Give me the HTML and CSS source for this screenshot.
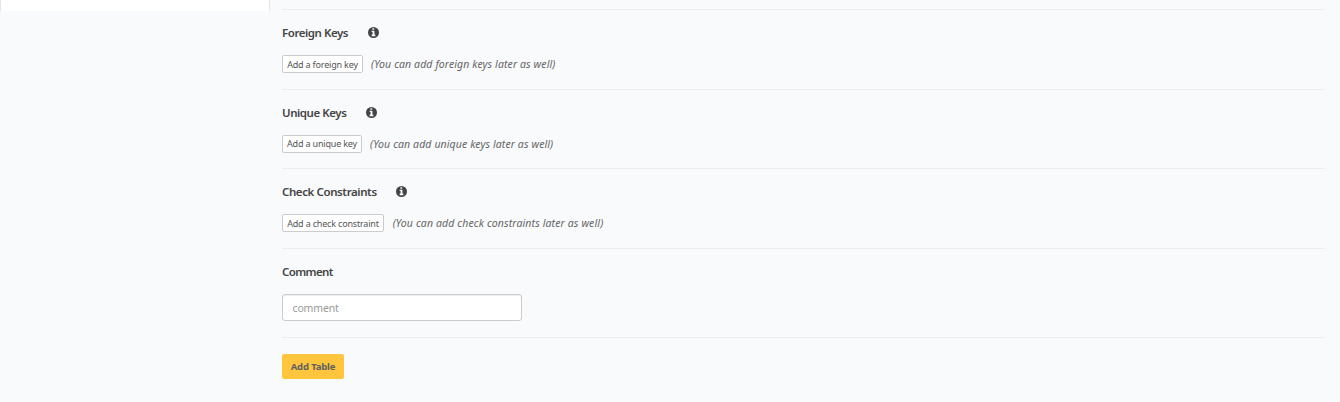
FILE: index.html
```html
<!DOCTYPE html>
<html lang="en">
<head>
<meta charset="utf-8">
<title>Add Table</title>
<link rel="stylesheet" href="styles.css">
</head>
<body>
<svg class="defs" aria-hidden="true">
  <symbol id="info" viewBox="0 0 1536 1536">
    <path fill-rule="evenodd" d="M768 0a768 768 0 1 0 0 1536A768 768 0 0 0 768 0ZM640 160h192q32 0 32 32v160q0 32-32 32H640q-32 0-32-32V192q0-32 32-32ZM544 512h320q32 0 32 32v512h96q32 0 32 32v160q0 32-32 32H544q-32 0-32-32v-160q0-32 32-32h96V704h-96q-32 0-32-32V544q0-32 32-32Z"/>
  </symbol>
</svg>
<div class="page">
  <aside class="sidebar"></aside>
  <main class="content">
    <section class="section">
      <h4 class="heading"><span class="foreign-title">Foreign Keys</span><svg class="info"><use href="#info"/></svg></h4>
      <div class="row"><button class="add foreign-add">Add a foreign key</button><i class="note">(You can add foreign keys later as well)</i></div>
    </section>
    <section class="section">
      <h4 class="heading"><span class="unique-title">Unique Keys</span><svg class="info"><use href="#info"/></svg></h4>
      <div class="row"><button class="add unique-add">Add a unique key</button><i class="note">(You can add unique keys later as well)</i></div>
    </section>
    <section class="section">
      <h4 class="heading"><span class="check-title">Check Constraints</span><svg class="info"><use href="#info"/></svg></h4>
      <div class="row"><button class="add check-add">Add a check constraint</button><i class="note check-note">(You can add check constraints later as well)</i></div>
    </section>
    <section class="section comment-section">
      <h4 class="heading comment-title"><span>Comment</span></h4>
      <input class="comment" type="text" placeholder="comment">
    </section>
    <section class="section submit-section">
      <button class="submit">Add Table</button>
    </section>
  </main>
</div>
</body>
</html>
```
FILE: styles.css
```css
* { box-sizing: border-box; }
body { margin: 0; background: #f8fafc; color: #444; font-family: "Noto Sans", sans-serif; }
button, input { font-family: inherit; margin: 0; }
.defs { display: none; }
.page { display: flex; height: 402px; overflow: hidden; }
.sidebar { width: 270px; height: 11px; background: #fff; border: solid #e5e5e5; border-width: 0 1px; }
.content { width: 1043px; margin: 9px 0 0 12px; }
.section { height: 79.6px; border-top: 1px solid #eee; padding-top: 14px; }
.heading { display: flex; align-items: center; height: 17px; margin: 0 0 14px; font-size: 11.5px; line-height: 17px; font-weight: 600; letter-spacing: -.45px; white-space: nowrap; }
.comment-title { letter-spacing: -.65px; }
.info { width: 11px; height: 11px; margin-left: 20px; fill: #444; }
.row { display: flex; align-items: center; height: 18px; white-space: nowrap; }
.add { height: 18px; padding: 0; background: #fff; color: #555; border: 1px solid #ccc; border-radius: 2px; font-size: 9px; line-height: 15px; letter-spacing: -.18px; }
.foreign-title { width: 65.6px; }
.unique-title { width: 63.5px; }
.check-title { width: 94px; letter-spacing: -.4px; }
.foreign-add { width: 81px; }
.unique-add { width: 80px; }
.check-add { width: 102px; }
.note { margin-left: 8px; font-size: 10.5px; line-height: 16px; letter-spacing: .11px; color: #666; }
.check-note { margin-left: 8.7px; letter-spacing: .13px; }
.comment-section { height: 89px; }
.comment { display: block; width: 240px; height: 27px; padding: 1px 9.5px 0; border: 1px solid #ccc; border-radius: 3px; box-shadow: inset 0 1px 1px rgba(0,0,0,.075); font-size: 10.5px; letter-spacing: -.15px; background: #fff; }
.comment::placeholder { color: #999; }
.submit-section { padding-top: 16px; }
.submit { display: block; width: 62px; height: 25px; padding: 0; border: 0; border-radius: 2px; background: #ffc53d; color: #606060; font-size: 9.5px; font-weight: 700; letter-spacing: -.15px; }
```
